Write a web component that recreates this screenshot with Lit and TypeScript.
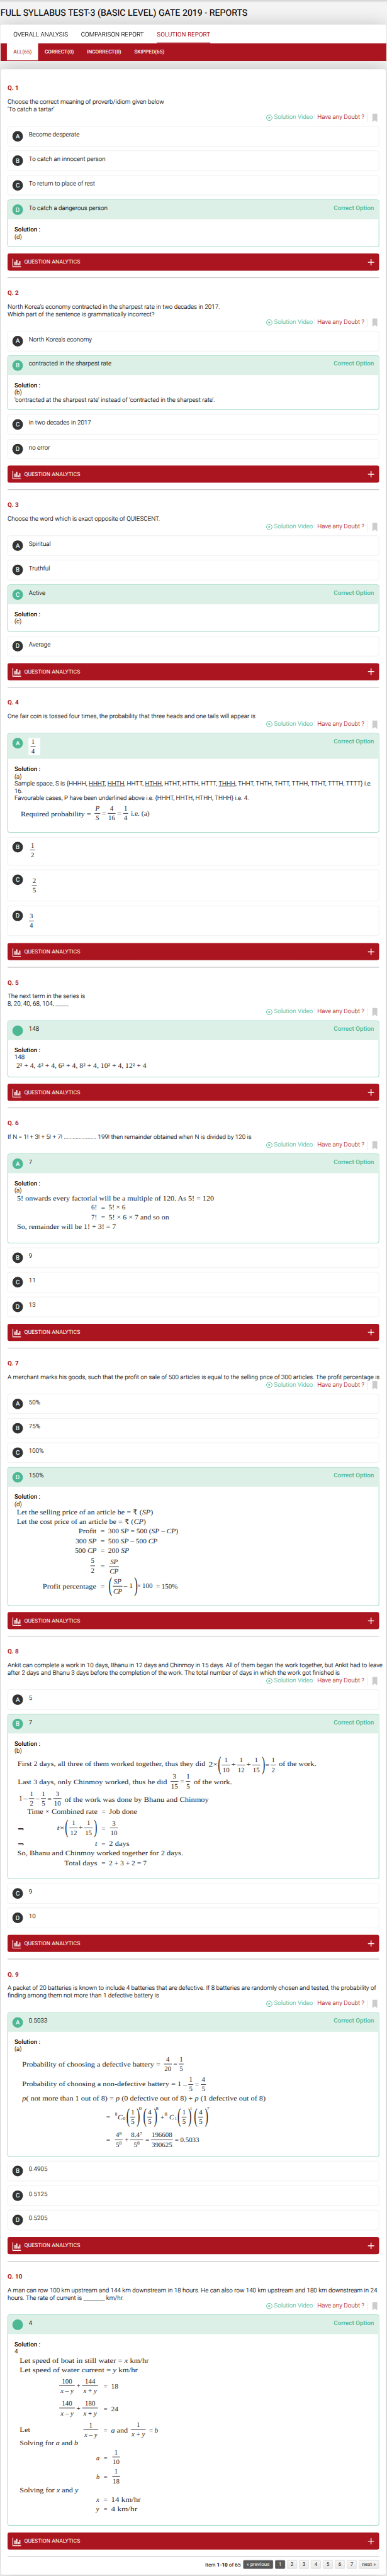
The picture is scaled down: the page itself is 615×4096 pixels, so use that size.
import { LitElement, html, svg, css, nothing } from "lit";
import { customElement, property } from "lit/decorators.js";
import { classMap } from "lit/directives/class-map.js";
import { styleMap } from "lit/directives/style-map.js";

const SERIF_SIZE = 20;
const KX = 0.7194;

/* Text between x1 and x2, vertically centred on y. _x_ is italic, ^8 is a superscript. */
type Item =
  | { t: "text"; x1: number; x2: number; y: number; s: string; small?: boolean }
  | { t: "frac"; x1: number; x2: number; y: number; n: string; yn: number; d: string; yd: number }
  | { t: "paren"; x: number; y1: number; y2: number; s: "(" | ")" };

interface Figure {
  y0: number;
  ky: number;
  x: number;
  top: number;
  w: number;
  h: number;
  items: Item[];
}

const T = (x1: number, y: number, s: string, x2: number): Item => ({ t: "text", x1, x2, y, s });
const S = (x1: number, y: number, s: string, x2: number): Item => ({ t: "text", x1, x2, y, s, small: true });
const F = (x1: number, x2: number, y: number, n: string, yn: number, d: string, yd: number): Item => ({
  t: "frac", x1, x2, y, n, yn, d, yd,
});
const P = (s: "(" | ")", x: number, y1: number, y2: number): Item => ({ t: "paren", x, y1, y2, s });

function spans(s: string) {
  return s.split(/(_[^_]+_|\^\d)/).filter((p) => p !== "").map((p) => {
    if (p.startsWith("_")) return svg`<tspan font-style="italic">${p.slice(1, -1)}</tspan>`;
    if (p.startsWith("^")) return svg`<tspan dy="-6" font-size="14">${p.slice(1)}</tspan>`;
    return svg`<tspan>${p}</tspan>`;
  });
}

function drawFigure(f: Figure) {
  const X = (x: number) => x * KX;
  const Y = (y: number) => f.y0 + y * f.ky;
  const draw = (i: Item) => {
    if (i.t === "text") {
      const size = i.small ? 14 : SERIF_SIZE;
      return svg`<text x=${X(i.x1)} y=${Y(i.y) + size * 0.32} font-size=${size}
        textLength=${X(i.x2) - X(i.x1)} lengthAdjust="spacingAndGlyphs">${spans(i.s)}</text>`;
    }
    if (i.t === "frac") {
      const c = (X(i.x1) + X(i.x2)) / 2;
      return svg`<rect x=${X(i.x1)} y=${Y(i.y) - 0.7} width=${X(i.x2) - X(i.x1)} height="1.5"></rect>
        <text x=${c} y=${Y(i.yn) + 6.4} font-size=${SERIF_SIZE} text-anchor="middle">${spans(i.n)}</text>
        <text x=${c} y=${Y(i.yd) + 6.4} font-size=${SERIF_SIZE} text-anchor="middle">${spans(i.d)}</text>`;
    }
    const size = (Y(i.y2) - Y(i.y1)) / 0.89;
    const dx = i.s === "(" ? -0.024 * size : -0.143 * size;
    const tf = `translate(${X(i.x) + dx} ${Y(i.y1) + 0.68 * size}) scale(0.5 1)`;
    return svg`<text transform=${tf} font-size=${size}>${i.s}</text>`;
  };
  return html`<svg class="figure" width=${f.w} height=${f.h} viewBox="${f.x} ${f.top} ${f.w} ${f.h}">
    ${f.items.map(draw)}
  </svg>`;
}

const small = (boxTop: number, h: number, items: Item[]): Figure => ({
  y0: 2020, ky: 0.54209, x: 83, top: boxTop + 14, w: 34, h, items,
});

interface Option {
  key: string;
  text?: string;
  figure?: Figure;
  height?: number;
}
interface Question {
  no: number;
  height: number;
  text: string[];
  options: Option[];
  correct: number;
  boxHeight: number;
  solution: unknown[];
  figure?: Figure;
}

const opts = (...t: string[]): Option[] => t.map((text, i) => ({ key: "ABCD"[i], text }));

const QUESTIONS: Question[] = [
  {
    no: 1, height: 609,
    text: ["Choose the correct meaning of proverb/idiom given below", "‘To catch a tartar’"],
    options: opts("Become desperate", "To catch an innocent person", "To return to place of rest", "To catch a dangerous person"),
    correct: 3, boxHeight: 137.4, solution: ["(d)"],
  },
  {
    no: 2, height: 618,
    text: ["North Korea’s economy contracted in the sharpest rate in two decades in 2017.", "Which part of the sentence is grammatically incorrect?"],
    options: opts("North Korea’s economy", "contracted in the sharpest rate", "in two decades in 2017", "no error"),
    correct: 1, boxHeight: 159.1,
    solution: ["(b)", "‘contracted at the sharpest rate’ instead of ‘contracted in the sharpest rate’."],
  },
  {
    no: 3, height: 575.5,
    text: ["Choose the word which is exact opposite of QUIESCENT."],
    options: opts("Spiritual", "Truthful", "Active", "Average"),
    correct: 2, boxHeight: 137.4, solution: ["(c)"],
  },
  {
    no: 4, height: 816.5,
    text: ["One fair coin is tossed four times, the probability that three heads and one tails will appear is"],
    options: [
      { key: "A", figure: small(2136.3, 50, [F(124, 144, 285, "1", 261, "4", 311)]), height: 75.6 },
      { key: "B", figure: small(2440.7, 55, [F(122, 142, 845, "1", 821, "2", 871)]), height: 82.9 },
      { key: "C", figure: small(2536.6, 64, [F(129, 149, 1038, "2", 1012, "5", 1064)]), height: 91.8 },
      { key: "D", figure: small(2641.8, 60, [F(117, 137, 1229, "3", 1203, "4", 1255)]), height: 87.8 },
    ],
    correct: 0, boxHeight: 290.5,
    solution: [
      "(a)",
      html`Sample space, S is {HHHH, <u>HHHT</u>, <u>HHTH</u>, HHTT, <u>HTHH</u>, HTHT, HTTH, HTTT, <u>THHH</u>, THHT, THTH, THTT, TTHH, TTHT, TTTH, TTTT} i.e.`,
      "16.",
      "Favourable cases, P have been underlined above i.e. {HHHT, HHTH, HTHH, THHH} i.e. 4.",
    ],
    figure: {
      y0: 2020, ky: 0.54209, x: 42, top: 2336.8, w: 900, h: 80,
      items: [
        T(84, 652, "Required probability =", 369),
        F(383, 406, 647, "_P_", 622, "_S_", 672),
        T(413, 647, "=", 430),
        F(437, 468, 647, "4", 622, "16", 672),
        T(475, 647, "=", 492),
        F(499, 519, 647, "1", 622, "4", 672),
        T(530, 647, "i.e. (a)", 606),
      ],
    },
  },
  {
    no: 5, height: 410,
    text: ["The next term in the series is", "8, 20, 40, 68, 104, _____"],
    options: [{ key: "", text: "148" }],
    correct: 0, boxHeight: 165, solution: ["148"],
    figure: {
      y0: 2800, ky: 0.54209, x: 42, top: 3094, w: 900, h: 36,
      items: [T(66, 565, "2² + 4, 4² + 4, 6² + 4, 8² + 4, 10² + 4, 12² + 4", 593)],
    },
  },
  {
    no: 6, height: 699.5,
    text: ["If N = 1! + 3! + 5! + 7! ...................... 199! then remainder obtained when N is divided by 120 is"],
    options: opts("7", "9", "11", "13"),
    correct: 0, boxHeight: 261.4, solution: ["(a)"],
    figure: {
      y0: 2800, ky: 0.54209, x: 42, top: 3482.9, w: 900, h: 130,
      items: [
        T(69, 1279, "5! onwards every factorial will be a multiple of 120. As 5! = 120", 867),
        T(370, 1329, "6!", 393), T(409, 1331, "=", 426), T(440, 1329, "5! × 6", 508),
        T(370, 1381, "7!", 393), T(409, 1383, "=", 426), T(440, 1381, "5! × 6 × 7 and so on", 685),
        T(69, 1434, "So, remainder will be 1! + 3! = 7", 470),
      ],
    },
  },
  {
    no: 7, height: 840.5,
    text: ["A merchant marks his goods, such that the profit on sale of 500 articles is equal to the selling price of 300 articles. The profit percentage is"],
    options: opts("50%", "75%", "100%", "150%"),
    correct: 3, boxHeight: 404.1, solution: ["(d)"],
    figure: {
      y0: 4100, ky: 0.44643, x: 42, top: 4394.9, w: 900, h: 270,
      items: [
        T(68, 690, "Let the selling price of an article be = ₹ (_SP_)", 620),
        T(68, 752, "Let the cost price of an article be = ₹ (_CP_)", 591),
        T(318, 812, "Profit", 391), T(407, 814, "=", 424), T(438, 812, "300 _SP_ = 500 (_SP_ – _CP_)", 722),
        T(306, 877, "300 _SP_", 391), T(407, 879, "=", 424), T(438, 877, "500 _SP_ – 500 _CP_", 638),
        T(304, 939, "500 _CP_", 391), T(407, 941, "=", 424), T(438, 939, "200 _SP_", 523),
        F(366, 385, 1040, "5", 1007, "2", 1071), T(407, 1045, "=", 424),
        F(442, 482, 1045, "_SP_", 1015, "_CP_", 1077),
        T(173, 1173, "Profit percentage", 390), T(407, 1173, "=", 424),
        P("(", 442, 1117, 1240),
        F(457, 496, 1173, "_SP_", 1140, "_CP_", 1206),
        T(501, 1171, "– 1", 538),
        P(")", 556, 1117, 1240),
        T(556, 1171, "×", 571), T(576, 1170, "100", 618), T(632, 1173, "= 150%", 720),
      ],
    },
  },
  {
    no: 8, height: 941,
    text: [
      "Ankit can complete a work in 10 days, Bhanu in 12 days and Chinmoy in 15 days. All of them began the work together, but Ankit had to leave",
      "after 2 days and Bhanu 3 days before the completion of the work. The total number of days in which the work got finished is",
    ],
    options: opts("5", "7", "9", "10"),
    correct: 1, boxHeight: 481, solution: ["(b)"],
    figure: {
      y0: 4770, ky: 0.57398, x: 42, top: 5115.9, w: 1000, h: 340,
      items: [
        T(71, 650, "First 2 days, all three of them worked together, thus they did", 832),
        T(845, 652, "2×", 882),
        P("(", 885, 611, 702),
        F(899, 933, 655, "1", 630, "10", 680), T(937, 653, "+", 955),
        F(960, 994, 655, "1", 630, "12", 680), T(998, 653, "+", 1016),
        F(1021, 1055, 655, "1", 630, "15", 680),
        P(")", 1072, 611, 702), T(1074, 654, "=", 1091),
        F(1097, 1117, 655, "1", 630, "2", 680),
        T(1130, 650, "of the work.", 1281),
        T(72, 741, "Last 3 days, only Chinmoy worked, thus he did", 677),
        F(691, 723, 738, "3", 712, "15", 763), T(730, 739, "=", 746), F(753, 771, 738, "1", 712, "5", 763),
        T(785, 741, "of the work.", 940),
        T(77, 823, "1", 90), T(95, 825, "–", 112), F(117, 139, 825, "1", 801, "2", 849),
        T(145, 825, "–", 160), F(166, 186, 825, "1", 801, "5", 849),
        T(192, 826, "=", 209), F(216, 249, 825, "3", 801, "10", 849),
        T(262, 831, "of the work was done by Bhanu and Chinmoy", 846),
        T(110, 890, "Time × Combined rate", 395), T(412, 892, "=", 428), T(442, 890, "Job done", 556),
        T(72, 981, "⇒", 98), T(231, 973, "_t_×", 262),
        P("(", 265, 935, 1024),
        F(281, 315, 974, "1", 949, "12", 1000), T(319, 972, "+", 336), F(341, 376, 974, "1", 949, "15", 1000),
        P(")", 392, 935, 1024), T(411, 978, "=", 427), F(445, 478, 974, "3", 951, "10", 1000),
        T(72, 1056, "⇒", 98), T(385, 1054, "_t_", 394), T(411, 1056, "=", 427), T(442, 1054, "2 days", 524),
        T(70, 1103, "So, Bhanu and Chinmoy worked together for 2 days.", 742),
        T(261, 1152, "Total days", 394), T(411, 1154, "=", 427), T(441, 1152, "2 + 3 + 2 = 7", 594),
      ],
    },
  },
  {
    no: 9, height: 881,
    text: [
      "A packet of 20 batteries is known to include 4 batteries that are defective. If 8 batteries are randomly chosen and tested, the probability of",
      "finding among them not more than 1 defective battery is",
    ],
    options: opts("0.5033", "0.4905", "0.5125", "0.5205"),
    correct: 0, boxHeight: 420.5, solution: ["(a)"],
    figure: {
      y0: 5650, ky: 0.60587, x: 42, top: 5985.5, w: 1000, h: 290,
      items: [
        T(90, 607, "Probability of choosing a defective battery =", 650),
        F(664, 696, 606, "4", 584, "20", 629), T(702, 606, "=", 719), F(725, 744, 606, "1", 584, "5", 629),
        T(90, 700, "Probability of choosing a non-defective battery = 1", 735),
        T(742, 703, "–", 758), F(763, 783, 704, "1", 680, "5", 727), T(790, 703, "=", 806),
        F(814, 834, 704, "4", 680, "5", 727),
        T(90, 772, "_p_( not more than 1 out of 8) = _p_ (0 defective out of 8) + _p_ (1 defective out of 8)", 1076),
        T(430, 861, "=", 446), S(466, 846, "8", 475), T(477, 861, "_C_", 497), S(498, 868, "0", 508),
        P("(", 514, 820, 908), F(528, 548, 861, "1", 837, "5", 884), P(")", 565, 820, 908), S(563, 821, "0", 574),
        P("(", 582, 820, 908), F(596, 617, 861, "4", 837, "5", 884), P(")", 635, 820, 908), S(631, 821, "8", 642),
        T(650, 861, "+", 666), S(667, 846, "8", 678), T(686, 861, "_C_", 705), S(708, 868, "1", 716),
        P("(", 721, 820, 908), F(736, 756, 861, "1", 837, "5", 884), P(")", 774, 820, 908), S(770, 821, "1", 778),
        P("(", 788, 820, 908), F(803, 823, 861, "4", 837, "5", 884), P(")", 842, 820, 908), S(838, 821, "7", 848),
        T(430, 972, "=", 446), F(465, 497, 971, "4^8", 947, "5^8", 994), T(506, 971, "+", 521),
        F(527, 580, 971, "8.4^7", 947, "5^8", 994), T(589, 972, "=", 605),
        F(612, 700, 971, "196608", 947, "390625", 994), T(708, 971, "= 0.5033", 807),
      ],
    },
  },
  {
    no: 10, height: 861,
    text: [
      "A man can row 100 km upstream and 144 km downstream in 18 hours. He can also row 140 km upstream and 180 km downstream in 24",
      "hours. The rate of current is ________ km/hr.",
    ],
    options: [{ key: "", text: "4" }],
    correct: 0, boxHeight: 614.9, solution: ["4"],
    figure: {
      y0: 6500, ky: 0.64349, x: 42, top: 6866, w: 900, h: 480,
      items: [
        T(80, 593, "Let speed of boat in still water = _x_ km/hr", 603),
        T(80, 636, "Let speed of water current = _y_ km/hr", 558),
        F(240, 303, 706, "100", 686, "_x_ – _y_", 730), T(310, 707, "+", 326),
        F(333, 397, 706, "144", 686, "_x_ + _y_", 730), T(420, 710, "=", 435), T(450, 709, "18", 479),
        F(240, 303, 807, "140", 787, "_x_ – _y_", 831), T(310, 808, "+", 326),
        F(333, 397, 807, "180", 787, "_x_ + _y_", 831), T(420, 812, "=", 435), T(450, 811, "24", 479),
        T(80, 907, "Let", 122), F(338, 398, 905, "1", 885, "_x_ – _y_", 929), T(420, 908, "=", 435),
        T(450, 908, "_a_ and", 518), F(530, 590, 905, "1", 883, "_x_ + _y_", 927), T(604, 908, "= _b_", 640),
        T(80, 966, "Solving for _a_ and _b_", 316),
        T(390, 1034, "_a_", 403), T(420, 1034, "=", 435), F(455, 486, 1029, "1", 1009, "10", 1051),
        T(390, 1119, "_b_", 403), T(420, 1119, "=", 435), F(455, 486, 1116, "1", 1095, "18", 1138),
        T(80, 1179, "Solving for _x_ and _y_", 317),
        T(390, 1222, "_x_", 402), T(420, 1223, "=", 435), T(450, 1223, "14 km/hr", 570),
        T(389, 1265, "_y_", 402), T(420, 1266, "=", 435), T(450, 1266, "4 km/hr", 556),
      ],
    },
  },
];

@customElement("question-card")
export class QuestionCard extends LitElement {
  @property({ attribute: false }) q!: Question;

  static styles = css`
    :host { display: block; }
    .card { display: flex; flex-direction: column; padding-top: 33px; box-sizing: border-box; }
    .card.first { padding-top: 45px; }
    .no { font-weight: 700; color: #aa1520; line-height: 22px; margin-bottom: 18px; -webkit-text-stroke: 0; }
    .line { line-height: 22px; white-space: nowrap; }
    .actions {
      display: flex; align-items: flex-start; height: 22px; line-height: 22px;
      padding-left: 753.5px; margin-bottom: 15px; white-space: nowrap;
    }
    .video { display: flex; gap: 5px; color: #4db893; width: 142px; border-right: 1px solid #e4e4e4; box-sizing: border-box; }
    .play { margin-top: 2.5px; flex: none; }
    .doubt { color: #aa1520; padding-left: 7.5px; width: 155px; box-sizing: border-box; height: 25px; border-right: 1px solid #d8d8d8; }
    .mark { margin-left: 12.5px; }
    .options { display: flex; flex-direction: column; gap: 12.7px; }
    .option { box-sizing: border-box; border: 1px solid #e4e4e4; border-radius: 6px; overflow: hidden; }
    .option.correct { border-color: #4db893; padding-right: 1px; }
    .head { display: flex; align-items: flex-start; padding: 13px 13px 0; box-sizing: border-box; }
    .correct .head { background: #dcf0e8; }
    .badge {
      width: 31px; height: 31px; border-radius: 50%; background: #333; color: #fff; flex: none;
      display: flex; align-items: center; justify-content: center; font-weight: 400; line-height: 31px;
      margin-right: 17px;
    }
    .correct .badge { background: #4db893; }
    .label { line-height: 22px; flex: 1; }
    .label .figure { background: #fff; margin-left: -1px; }
    .tag { color: #4db893; font-weight: 500; line-height: 22px; -webkit-text-stroke: 0; }
    .solution { padding: 19.4px 0 0 19px; line-height: 21.1px; white-space: nowrap; }
    .solution b { font-weight: 500; display: block; -webkit-text-stroke: 0; }
    .figure {
      display: block; overflow: visible; fill: #241f28; -webkit-text-stroke: 0;
      font-family: "Liberation Serif", "DejaVu Serif", serif; font-weight: 400;
    }
    .analytics {
      margin-top: auto; flex: none; height: 50px; box-sizing: border-box; background: #aa1520; color: #fff; border-radius: 6px;
      display: flex; align-items: center; padding: 0 14px; font-size: 16px; font-weight: 400; line-height: 22px;
      -webkit-text-stroke: 0;
    }
    .chart { margin-right: 9px; margin-top: 5px; }
    .grow { flex: 1; }
    .rule { flex: none; height: 1px; border-top: 1px solid #9a9a9a; background: #eee; margin-top: 20px; }
  `;

  private option(o: Option, i: number) {
    const q = this.q;
    const ok = i === q.correct;
    const boxH = ok ? q.boxHeight : o.height ?? 58.7;
    const headH = ok ? (o.height ?? 57) - 1 : boxH - 2;
    return html`<div class=${classMap({ option: true, correct: ok })} style=${styleMap({ height: `${boxH}px` })}>
      <div class="head" style=${styleMap({ height: `${headH}px` })}>
        <span class="badge">${o.key}</span>
        <span class="label">${o.figure ? drawFigure(o.figure) : o.text}</span>
        ${ok ? html`<span class="tag">Correct Option</span>` : nothing}
      </div>
      ${ok
        ? html`<div class="solution"><b>Solution :</b>${q.solution.map((s) => html`<div>${s}</div>`)}${q.figure ? drawFigure(q.figure) : nothing}</div>`
        : nothing}
    </div>`;
  }

  render() {
    const q = this.q;
    return html`<section class=${classMap({ card: true, first: q.no === 1 })} style=${styleMap({ height: `${q.height}px` })}>
      <div class="no">Q. ${q.no}</div>
      ${q.text.map((l) => html`<div class="line">${l}</div>`)}
      <div class="actions">
        <span class="video">
          <svg class="play" width="18" height="18" viewBox="0 0 18 18">
            <circle cx="9" cy="9" r="8.1" fill="none" stroke="#4db893" stroke-width="1.7"></circle>
            <path d="M6.6 5.4 L12.6 9 L6.6 12.6 Z" fill="#4db893"></path>
          </svg>
          <span>Solution Video</span>
        </span>
        <span class="doubt">Have any Doubt ?</span>
        <svg class="mark" width="15" height="25" viewBox="0 0 15 25"><path d="M0 0 H15 V25 L7.5 19.5 L0 25 Z" fill="#ccc"></path></svg>
      </div>
      <div class="options">${q.options.map((o, i) => this.option(o, i))}</div>
      <div class="analytics">
        <svg class="chart" width="25.5" height="25.5" viewBox="0 0 25.5 25.5" fill="#fff">
          <path d="M0 0 H2.6 V22.6 H25.4 V25.4 H0 Z"></path>
          <path d="M6 8.5 H9.4 V19 H6 Z M11.3 3.5 H14.7 V19 H11.3 Z M16.2 13 H18.8 V19 H16.2 Z M20.2 7 H23.4 V19 H20.2 Z"></path>
        </svg>
        <span class="grow">QUESTION ANALYTICS</span>
        <svg width="19" height="19" viewBox="0 0 19 19" fill="#fff"><path d="M8.2 0 H10.8 V8.2 H19 V10.8 H10.8 V19 H8.2 V10.8 H0 V8.2 H8.2 Z"></path></svg>
      </div>
      <div class="rule"></div>
    </section>`;
  }
}

@customElement("app-root")
export class AppRoot extends LitElement {
  static styles = css`
    :host { display: block; width: 615px; height: 4096px; overflow: hidden; background: #f4f4f4; }
    .page {
      width: 1128px; height: 7509px; transform: scale(0.54521, 0.54548); transform-origin: 0 0;
      font: 300 18px/22px Roboto, "Liberation Sans", sans-serif; color: #000; background: #f4f4f4;
      -webkit-text-stroke: 0.22px; text-rendering: geometricPrecision;
      display: flex; flex-direction: column; box-sizing: border-box;
    }
    .edge { height: 8px; flex: none; background: linear-gradient(#d2d2d2, #f4f4f4); }
    .title { margin: 0 0 0 1.5px; height: 64px; flex: none; line-height: 60px; font-size: 26px; font-weight: 400; white-space: nowrap; }
    .tabs {
      flex: none; height: 54px; margin: 0 2px 0 1px; background: #fff; border-radius: 6px 6px 0 0; z-index: 1;
      display: flex; gap: 38px; padding-left: 38px; box-sizing: border-box; box-shadow: 0 0 50px rgba(0, 0, 0, 0.2);
    }
    .tab { line-height: 59px; height: 54px; box-sizing: border-box; white-space: nowrap; }
    .tab.on { color: #aa1520; border-bottom: 2px solid #aa1520; font-weight: 400; -webkit-text-stroke: 0; }
    .filters {
      flex: none; height: 50px; margin: 0 2px 0 1px; background: #aa1520; color: #fff; z-index: 1; -webkit-text-stroke: 0;
      display: flex; padding-left: 19px; font-size: 15px; font-weight: 500; line-height: 50px;
    }
    .filter { padding: 0 19px; }
    .filter.on { background: #fff; color: #aa1520; font-weight: 400; }
    .panel {
      flex: none; height: 7303px; margin: 26px 3px 0 2px; background: #fff; border-radius: 6px; box-sizing: border-box;
      padding: 0 20px; box-shadow: 0 0 50px rgba(0, 0, 0, 0.25);
    }
    .pager { display: flex; justify-content: flex-end; align-items: center; gap: 6px; margin-top: 9px; font-size: 15px; font-weight: 400; -webkit-text-stroke: 0; }
    .pager b { font-weight: 700; }
    .count { margin-right: 1px; }
    .btn {
      box-sizing: border-box; height: 25px; min-width: 28.8px; padding: 0 9px; line-height: 23px; text-align: center; border: 1px solid #c8c8c8;
      border-radius: 3px; background: linear-gradient(#f6f6f6, #e8e8e8); color: #222; white-space: nowrap;
    }
    .btn.dark { background: #585858; border-color: #4a4a4a; color: #fff; }
  `;

  render() {
    return html`<main class="page">
      <div class="edge"></div>
      <h1 class="title">FULL SYLLABUS TEST-3 (BASIC LEVEL) GATE 2019 - REPORTS</h1>
      <nav class="tabs">
        <span class="tab">OVERALL ANALYSIS</span>
        <span class="tab">COMPARISON REPORT</span>
        <span class="tab on">SOLUTION REPORT</span>
      </nav>
      <nav class="filters">
        <span class="filter on">ALL(65)</span>
        <span class="filter">CORRECT(0)</span>
        <span class="filter">INCORRECT(0)</span>
        <span class="filter">SKIPPED(65)</span>
      </nav>
      <div class="panel">
        ${QUESTIONS.map((q) => html`<question-card .q=${q}></question-card>`)}
        <div class="pager">
          <span class="count">Item <b>1-10</b> of 65</span>
          <span class="btn dark">« previous</span>
          <span class="btn dark">1</span>
          ${[2, 3, 4, 5, 6, 7].map((n) => html`<span class="btn">${n}</span>`)}
          <span class="btn">next »</span>
        </div>
      </div>
    </main>`;
  }
}
